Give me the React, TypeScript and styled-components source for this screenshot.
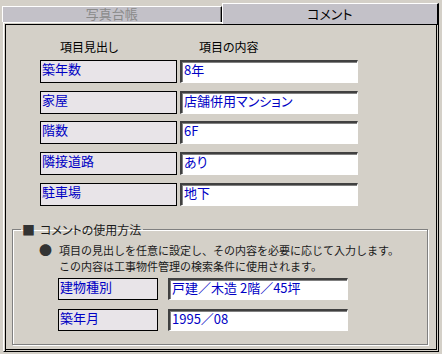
import React from 'react';
import styled, { createGlobalStyle } from 'styled-components';

const GlobalStyle = createGlobalStyle`
  html, body {
    margin: 0;
    padding: 0;
    background: #d4d0c8;
  }
  body {
    font-family: "Noto Sans CJK JP", "DejaVu Sans", sans-serif;
    font-size: 12px;
    font-feature-settings: "palt";
  }
`;

const Window = styled.div`
  width: 442px;
  height: 354px;
  box-sizing: border-box;
  padding: 3px 3px 2px 2px;
  display: flex;
  flex-direction: column;
  background: #d4d0c8;
`;

const TabStrip = styled.div`
  display: flex;
  align-items: flex-end;
  height: 19px;
`;

const Tab = styled.div<{ $active?: boolean }>`
  box-sizing: border-box;
  width: ${p => (p.$active ? 218 : 220)}px;
  height: ${p => (p.$active ? 21 : 16)}px;
  margin-bottom: ${p => (p.$active ? -2 : 0)}px;
  position: relative;
  z-index: ${p => (p.$active ? 1 : 0)};
  background: #c3c1c8;
  border-top: 1px solid #fff;
  border-left: 1px solid #fff;
  border-right: ${p => (p.$active ? 2 : 1)}px solid #000;
  box-shadow: ${p => (p.$active ? 'none' : 'inset -1px 0 0 #808080')};
  color: ${p => (p.$active ? '#000' : '#8a8a8a')};
  font-size: 13px;
  text-align: center;
  line-height: ${p => (p.$active ? 19 : 14)}px;
`;

const Panel = styled.div`
  flex: 1;
  margin-left: 1px;
  box-sizing: border-box;
  border: 1px solid;
  border-color: #fff #000 #000 #fff;
  box-shadow: inset 1px 1px 0 #d4d0c8, inset 2px 2px 0 #000,
    inset -1px -1px 0 #d4d0c8, inset -2px -2px 0 #000;
  padding-top: 17px;
  display: flex;
  flex-direction: column;
`;

const ItemGrid = styled.div`
  margin-left: 36px;
  display: grid;
  grid-template-columns: 137px 178px;
  column-gap: 3px;
  row-gap: 7.7px;
`;

const HeadCell = styled.div<{ $indent: number }>`
  padding-left: ${p => p.$indent}px;
  line-height: 14px;
  height: 14px;
  margin-bottom: -1.7px;
  color: #000;
`;

const LabelBox = styled.div<{ $w?: number; $h?: number }>`
  box-sizing: border-box;
  width: ${p => (p.$w ? `${p.$w}px` : 'auto')};
  height: ${p => p.$h ?? 23}px;
  background: #e8e4e8;
  border: 1px solid #000;
  color: #0000c4;
  padding: 0 1px;
  font-size: 13px;
  line-height: 16px;
  white-space: nowrap;
`;

const ValueBox = styled.div<{ $w?: number; $h?: number }>`
  box-sizing: border-box;
  width: ${p => (p.$w ? `${p.$w}px` : 'auto')};
  height: ${p => p.$h ?? 23}px;
  background: #fff;
  border-top: 2px solid #404040;
  border-left: 2px solid #404040;
  border-right: 1px solid #ffffff;
  border-bottom: 1px solid #ffffff;
  box-shadow: inset 1px 1px 0 #808080;
  color: #0000c4;
  padding: 0 2px;
  font-size: 13px;
  line-height: 16px;
  white-space: nowrap;
`;

const Group = styled.fieldset`
  box-sizing: border-box;
  width: 416px;
  margin: 17px 0 0 8px;
  padding: 0 0 13px 0;
  border: 1px solid #808080;
  box-shadow: inset 1px 1px 0 #fff, 1px 1px 0 #fff;
  min-width: 0;
`;

const Legend = styled.legend`
  margin-left: 8px;
  padding: 0 2px 0 1px;
  line-height: 14px;
  color: #1a1a1a;
  display: flex;
  align-items: center;
`;

const Square = styled.span`
  color: #333;
  margin-right: 5px;
  font-size: 13px;
`;

const Note = styled.div`
  display: flex;
  margin: 5px 0 0 26px;
  color: #1a1a1a;
`;

const Dot = styled.span`
  width: 20px;
  flex: none;
  color: #333;
  font-size: 13px;
  line-height: 16px;
`;

const NoteText = styled.div`
  display: flex;
  flex-direction: column;
  font-size: 11px;
  font-feature-settings: normal;
`;

const NoteLine = styled.div`
  white-space: nowrap;
  line-height: 16px;
  height: 16px;
`;

const PairList = styled.div`
  margin: 4px 0 0 45px;
  display: flex;
  flex-direction: column;
  gap: 9px;
`;

const Pair = styled.div`
  display: flex;
  gap: 10px;
`;

const items: [string, string][] = [
  ['築年数', '8年'],
  ['家屋', '店舗併用マンション'],
  ['階数', '6F'],
  ['隣接道路', 'あり'],
  ['駐車場', '地下'],
];

const examples: [string, string][] = [
  ['建物種別', '戸建／木造 2階／45坪'],
  ['築年月', '1995／08'],
];

export default function App() {
  return (
    <>
      <GlobalStyle />
      <Window>
        <TabStrip>
          <Tab>写真台帳</Tab>
          <Tab $active>コメント</Tab>
        </TabStrip>
        <Panel>
          <ItemGrid>
            <HeadCell $indent={20}>項目見出し</HeadCell>
            <HeadCell $indent={19}>項目の内容</HeadCell>
            {items.map(([label, value]) => (
              <React.Fragment key={label}>
                <LabelBox>{label}</LabelBox>
                <ValueBox>{value}</ValueBox>
              </React.Fragment>
            ))}
          </ItemGrid>
          <Group>
            <Legend>
              <Square>■</Square>コメントの使用方法
            </Legend>
            <Note>
              <Dot>●</Dot>
              <NoteText>
                <NoteLine>項目の見出しを任意に設定し、その内容を必要に応じて入力します。</NoteLine>
                <NoteLine>この内容は工事物件管理の検索条件に使用されます。</NoteLine>
              </NoteText>
            </Note>
            <PairList>
              {examples.map(([label, value]) => (
                <Pair key={label}>
                  <LabelBox $w={100} $h={22}>{label}</LabelBox>
                  <ValueBox $w={180} $h={22}>{value}</ValueBox>
                </Pair>
              ))}
            </PairList>
          </Group>
        </Panel>
      </Window>
    </>
  );
}
